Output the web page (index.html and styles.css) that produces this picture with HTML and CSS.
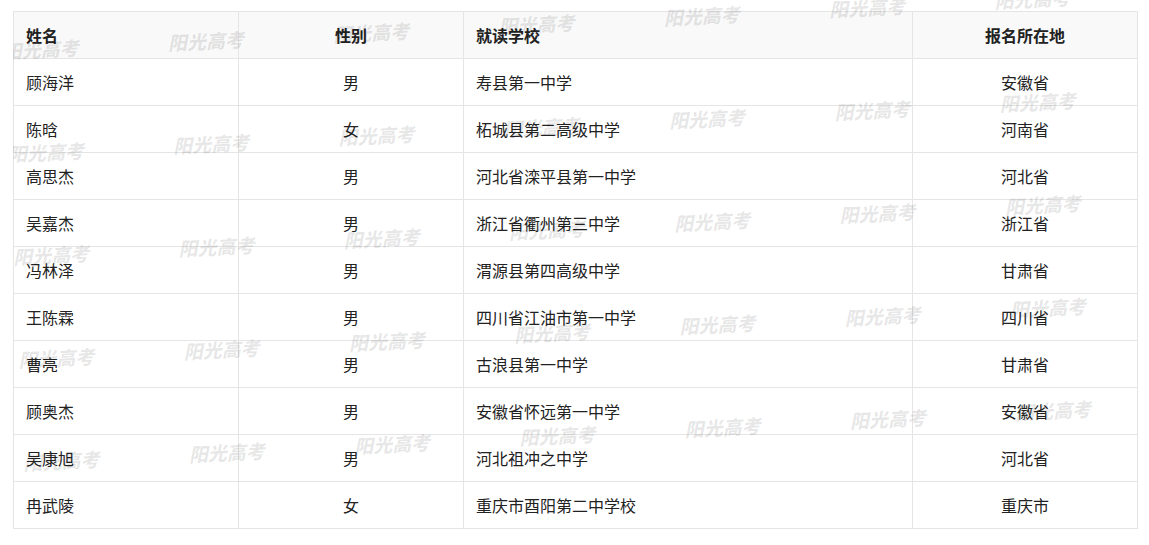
FILE: index.html
```html
<!DOCTYPE html>
<html lang="zh-CN">
<head>
<meta charset="utf-8">
<title>名单</title>
<link rel="stylesheet" href="styles.css">
</head>
<body>
<div class="sheet">
  <table class="roster">
    <colgroup>
      <col class="c-name"><col class="c-sex"><col class="c-school"><col class="c-place">
    </colgroup>
    <thead>
      <tr><th class="left">姓名</th><th class="center">性别</th><th class="left">就读学校</th><th class="center">报名所在地</th></tr>
    </thead>
    <tbody>
      <tr><td class="left">顾海洋</td><td class="center">男</td><td class="left">寿县第一中学</td><td class="center">安徽省</td></tr>
      <tr><td class="left">陈晗</td><td class="center">女</td><td class="left">柘城县第二高级中学</td><td class="center">河南省</td></tr>
      <tr><td class="left">高思杰</td><td class="center">男</td><td class="left">河北省滦平县第一中学</td><td class="center">河北省</td></tr>
      <tr><td class="left">吴嘉杰</td><td class="center">男</td><td class="left">浙江省衢州第三中学</td><td class="center">浙江省</td></tr>
      <tr><td class="left">冯林泽</td><td class="center">男</td><td class="left">渭源县第四高级中学</td><td class="center">甘肃省</td></tr>
      <tr><td class="left">王陈霖</td><td class="center">男</td><td class="left">四川省江油市第一中学</td><td class="center">四川省</td></tr>
      <tr><td class="left">曹亮</td><td class="center">男</td><td class="left">古浪县第一中学</td><td class="center">甘肃省</td></tr>
      <tr><td class="left">顾奥杰</td><td class="center">男</td><td class="left">安徽省怀远第一中学</td><td class="center">安徽省</td></tr>
      <tr><td class="left">吴康旭</td><td class="center">男</td><td class="left">河北祖冲之中学</td><td class="center">河北省</td></tr>
      <tr><td class="left">冉武陵</td><td class="center">女</td><td class="left">重庆市酉阳第二中学校</td><td class="center">重庆市</td></tr>
    </tbody>
  </table>
  <div class="watermarks" aria-hidden="true">
    <div class="wm-grid">
      <span>阳光高考</span><span>阳光高考</span><span>阳光高考</span><span>阳光高考</span><span>阳光高考</span><span>阳光高考</span><span>阳光高考</span>
      <span>阳光高考</span><span>阳光高考</span><span>阳光高考</span><span>阳光高考</span><span>阳光高考</span><span>阳光高考</span><span>阳光高考</span>
      <span>阳光高考</span><span>阳光高考</span><span>阳光高考</span><span>阳光高考</span><span>阳光高考</span><span>阳光高考</span><span>阳光高考</span>
      <span>阳光高考</span><span>阳光高考</span><span>阳光高考</span><span>阳光高考</span><span>阳光高考</span><span>阳光高考</span><span>阳光高考</span>
      <span>阳光高考</span><span>阳光高考</span><span>阳光高考</span><span>阳光高考</span><span>阳光高考</span><span>阳光高考</span><span>阳光高考</span>
    </div>
  </div>
</div>
</body>
</html>
```

FILE: styles.css
```css
html, body {
  margin: 0;
  padding: 0;
  background: #ffffff;
}

body {
  font-family: "Noto Sans CJK SC", "Noto Sans", sans-serif;
  color: #222222;
}

.sheet {
  position: relative;
  width: 1125px;
  margin-left: 13px;
  padding-top: 11px;
  padding-bottom: 17px;
  overflow: hidden;
}

.roster {
  width: 1125px;
  table-layout: fixed;
  border-collapse: separate;
  border-spacing: 0;
  border-top: 1px solid #e5e5e5;
  border-left: 1px solid #e5e5e5;
  font-size: 16px;
}

.c-name { width: 225px; }
.c-sex { width: 225px; }
.c-school { width: 449px; }
.c-place { width: 225px; }

.roster th,
.roster td {
  height: 45px;
  padding: 0 12px 1px;
  border-right: 1px solid #e5e5e5;
  border-bottom: 1px solid #e5e5e5;
  vertical-align: middle;
  line-height: 20px;
  box-sizing: content-box;
  white-space: nowrap;
}

.roster th {
  background: #f9f9f9;
  font-weight: 700;
  color: #222222;
}

.roster td {
  font-weight: 400;
}

.left { text-align: left; }
.center { text-align: center; }

.watermarks {
  position: absolute;
  inset: 0;
  pointer-events: none;
  overflow: hidden;
}

.wm-grid {
  position: absolute;
  left: -11px;
  top: 39px;
  display: grid;
  grid-template-columns: repeat(7, 165.5px);
  grid-auto-rows: 103px;
  transform: rotate(-2.9deg);
  transform-origin: 0 0;
}

.wm-grid span {
  display: block;
  font-family: "Noto Sans CJK SC", sans-serif;
  font-size: 19px;
  line-height: 24px;
  font-weight: 900;
  font-style: italic;
  color: rgba(0, 0, 0, 0.095);
  white-space: nowrap;
}
```
